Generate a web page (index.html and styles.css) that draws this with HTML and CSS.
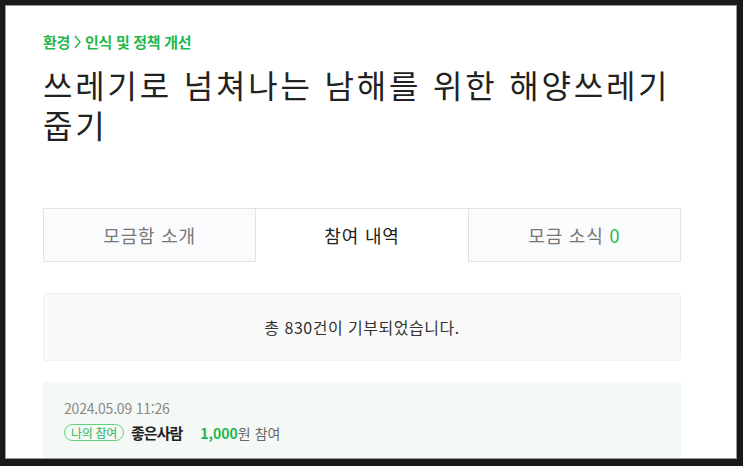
FILE: index.html
```html
<!DOCTYPE html>
<html lang="ko">
<head>
    <meta charset="UTF-8">
    <title>해양쓰레기 줍기 - 참여 내역</title>
    <link rel="stylesheet" href="styles.css">
</head>
<body>
    <div class="panel">
        <div class="breadcrumb">
            <span>환경</span>
            <svg class="crumb-arrow" width="7" height="14" viewBox="0 0 7 14"><path d="M1 1 L6 7 L1 13" fill="none" stroke="currentColor" stroke-width="1.4"/></svg>
            <span>인식 및 정책 개선</span>
        </div>

        <h1 class="title">쓰레기로 넘쳐나는 남해를 위한 해양쓰레기 줍기</h1>

        <div class="tabs">
            <div class="tab">모금함 소개</div>
            <div class="tab active">참여 내역</div>
            <div class="tab">모금 소식 <span class="count">0</span></div>
        </div>

        <div class="summary">총 830건이 기부되었습니다.</div>

        <div class="entry">
            <div class="entry-date">2024.05.09 11:26</div>
            <div class="entry-row">
                <span class="badge">나의 참여</span>
                <span class="entry-name">좋은사람</span>
                <span class="entry-amount"><b>1,000</b>원 참여</span>
            </div>
        </div>
    </div>
</body>
</html>
```

FILE: styles.css
```css
body {
    margin: 0;
    padding: 5px 6px 7px 5px;
    background-color: #191919;
    font-family: "Noto Sans CJK KR", "Noto Sans", sans-serif;
    color: #222;
    height: 466px;
    box-sizing: border-box;
    overflow: hidden;
}
.panel {
    height: 454px;
    box-sizing: border-box;
    background-color: white;
    border: 1px solid #9a9a9a;
    padding: 26px 55px 0 37px;
    overflow: hidden;
}
.breadcrumb {
    display: flex;
    align-items: center;
    gap: 3px;
    font-size: 15px;
    line-height: 20px;
    font-weight: bold;
    color: #1fb84d;
    letter-spacing: -0.3px;
}
.crumb-arrow {
    margin: 0 1px;
}
.title {
    margin: 12px 0 0 0;
    font-size: 32px;
    line-height: 40px;
    font-weight: normal;
    color: #222;
    letter-spacing: 2.8px;
    width: 638px;
}
.tabs {
    display: flex;
    margin-top: 64px;
    height: 54px;
}
.tab {
    flex: 1;
    display: flex;
    align-items: center;
    justify-content: center;
    gap: 6px;
    font-size: 18px;
    color: #777;
    background-color: #fafbfd;
    border: 1px solid #e2e2e2;
    margin-left: -1px;
    letter-spacing: 0.8px;
}
.tab:first-child {
    margin-left: 0;
}
.tab.active {
    background-color: white;
    color: #222;
    border-bottom-color: white;
}
.tab .count {
    color: #1fb84d;
}
.summary {
    margin-top: 31px;
    height: 68px;
    box-sizing: border-box;
    border: 1px solid #f0f0f0;
    border-radius: 3px;
    background-color: #fafafa;
    display: flex;
    align-items: center;
    justify-content: center;
    font-size: 16px;
    color: #333;
    letter-spacing: 0.5px;
}
.entry {
    margin-top: 21px;
    height: 120px;
    background-color: #f5f9f6;
    padding: 16px 21px;
}
.entry-date {
    font-size: 14px;
    line-height: 20px;
    color: #888;
    letter-spacing: -0.2px;
}
.entry-row {
    display: flex;
    align-items: center;
    margin-top: 4px;
    font-size: 14px;
}
.badge {
    display: inline-block;
    height: 17px;
    line-height: 16px;
    padding: 0 6px;
    box-sizing: border-box;
    border: 1px solid #5fd27e;
    border-radius: 9px;
    color: #2bb653;
    font-size: 12px;
    letter-spacing: -0.3px;
    margin-right: 7px;
}
.entry-name {
    font-weight: bold;
    font-size: 15px;
    color: #222;
    letter-spacing: -1px;
    margin-right: 18px;
}
.entry-amount {
    color: #666;
}
.entry-amount b {
    color: #1fb84d;
}
```
